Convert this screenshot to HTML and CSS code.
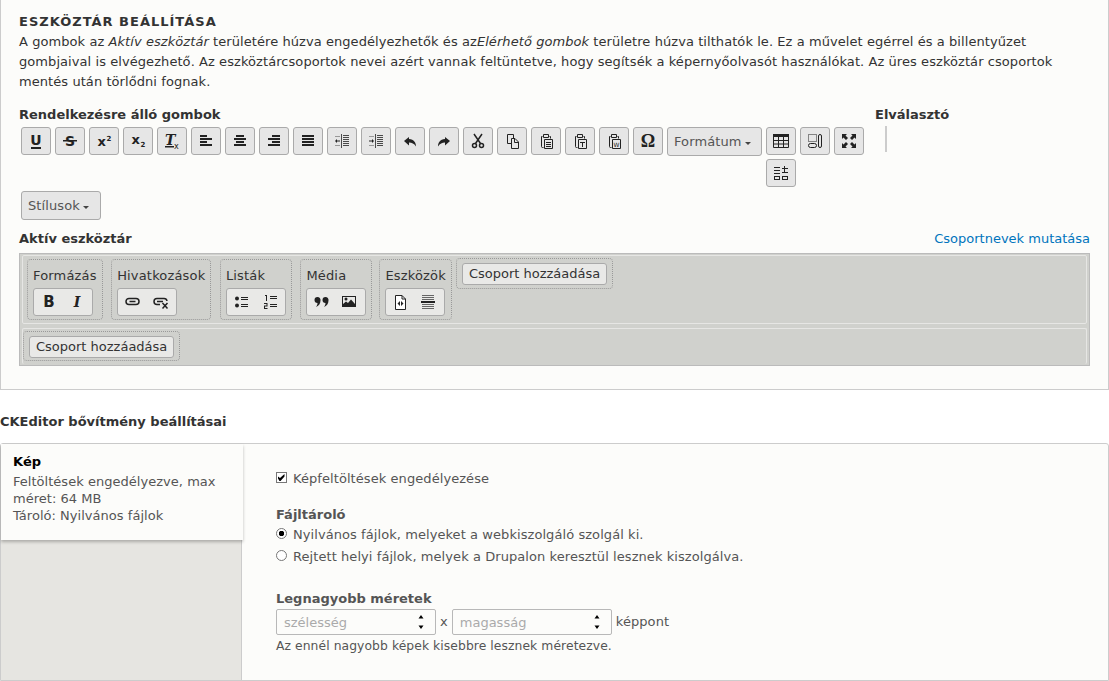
FILE: index.html
```html
<!DOCTYPE html>
<html lang="hu">
<head>
    <meta charset="UTF-8">
    <meta name="viewport" content="width=device-width, initial-scale=1.0">
    <title>Eszköztár beállítása</title>
    <link rel="stylesheet" href="styles.css">
</head>
<body>
    <section class="panel">
        <h2 class="panel-title">Eszköztár beállítása</h2>
        <p class="panel-help">A gombok az <em>Aktív eszköztár</em> területére húzva engedélyezhetők és az<em>Elérhető gombok</em> területre húzva tilthatók le. Ez a művelet egérrel és a billentyűzet gombjaival is elvégezhető. Az eszköztárcsoportok nevei azért vannak feltüntetve, hogy segítsék a képernyőolvasót használókat. Az üres eszköztár csoportok mentés után törlődni fognak.</p>

        <div class="available">
            <div class="available-main">
                <div class="label">Rendelkezésre álló gombok</div>
                <ul class="button-list">
                    <li class="btn"><svg viewBox="0 0 16 16"><text x="8" y="12" class="g-bold" text-anchor="middle">U</text><rect x="3" y="14" width="10" height="2"/></svg></li>
                    <li class="btn"><svg viewBox="0 0 16 16"><text x="8" y="13" class="g-bold" text-anchor="middle">S</text><rect x="1" y="7" width="14" height="1.500"/></svg></li>
                    <li class="btn"><svg viewBox="0 0 16 16"><text x="1.500" y="13" class="g-bold g-mid">x</text><text x="10.500" y="8" class="g-bold g-tiny">2</text></svg></li>
                    <li class="btn"><svg viewBox="0 0 16 16"><text x="1.500" y="11" class="g-bold g-mid">x</text><text x="10.500" y="14" class="g-bold g-tiny">2</text></svg></li>
                    <li class="btn"><svg viewBox="0 0 16 16"><text x="1" y="12" class="g-serif">T</text><rect x="1" y="13" width="9" height="1.500"/><text x="10" y="15.500" class="g-plain g-tiny-x">x</text></svg></li>
                    <li class="btn"><svg viewBox="0 0 16 16"><path d="M2 2h7v2H2zM2 5h12v2H2zM2 8h7v2H2zM2 11h12v2H2z"/></svg></li>
                    <li class="btn"><svg viewBox="0 0 16 16"><path d="M4 2h8v2H4zM2 5h12v2H2zM4 8h8v2H4zM2 11h12v2H2z"/></svg></li>
                    <li class="btn"><svg viewBox="0 0 16 16"><path d="M6 2h8v2H6zM2 5h12v2H2zM6 8h8v2H6zM2 11h12v2H2z"/></svg></li>
                    <li class="btn"><svg viewBox="0 0 16 16"><path d="M2 2h12v2H2zM2 5h12v2H2zM2 8h12v2H2zM2 11h12v2H2z"/></svg></li>
                    <li class="btn"><svg viewBox="0 0 16 16"><path d="M7 1h1v14H7zM9 2h6v1H9zM9 4h6v1H9zM9 6h6v1H9zM9 8h6v1H9zM9 10h6v1H9zM9 12h6v1H9z" opacity=".8"/><path d="M3 7.500h3v1H3V10L1 8l2-2z"/><path d="M1 3h5v1H1zM1 12h5v1H1z" opacity=".4"/></svg></li>
                    <li class="btn"><svg viewBox="0 0 16 16"><path d="M7 1h1v14H7zM9 2h6v1H9zM9 4h6v1H9zM9 6h6v1H9zM9 8h6v1H9zM9 10h6v1H9zM9 12h6v1H9z" opacity=".8"/><path d="M1 7.500h3V6l2 2-2 2V8.500H1z"/><path d="M1 3h5v1H1zM1 12h5v1H1z" opacity=".4"/></svg></li>
                    <li class="btn"><svg viewBox="0 0 16 16"><path d="M7 4 2 8l5 4.500v-3c3 0 5 1 7 4 0-4-2-7-7-7.500z"/></svg></li>
                    <li class="btn"><svg viewBox="0 0 16 16"><path d="M9 4l5 4-5 4.500v-3c-3 0-5 1-7 4 0-4 2-7 7-7.500z"/></svg></li>
                    <li class="btn"><svg viewBox="0 0 16 16" class="line thick"><path d="M4 1l6.500 9.500M12 1 5.500 10.500"/><circle cx="4.500" cy="12.500" r="2"/><circle cx="11.500" cy="12.500" r="2"/></svg></li>
                    <li class="btn"><svg viewBox="0 0 16 16" class="line"><path d="M9.500 5V1.500h-6v9h4"/><path d="M7.500 5.500H11L14.500 9v6.500h-7z"/><path d="M10.500 5.500v4h4"/></svg></li>
                    <li class="btn"><svg viewBox="0 0 16 16" class="line"><path d="M4.500 3.500h-1v10a1 1 0 0 0 1 1h1M11.500 3.500h1v2M5.500 1.500h5v3h-5zM6.500 6.500h8v9h-8zM8 9.500h5M8 11.500h5M8 13.500h5"/></svg></li>
                    <li class="btn"><svg viewBox="0 0 16 16" class="line"><path d="M4.500 3.500h-1v10a1 1 0 0 0 1 1h1M11.500 3.500h1v2M5.500 1.500h5v3h-5zM6.500 6.500h8v9h-8zM8 9.500h5M10.500 9.500V14"/></svg></li>
                    <li class="btn"><svg viewBox="0 0 16 16" class="line"><path d="M4.500 3.500h-1v10a1 1 0 0 0 1 1h1M11.500 3.500h1v2M5.500 1.500h5v3h-5zM6.500 6.500h8v9h-8z"/><text x="10.500" y="13.500" class="g-w" text-anchor="middle">W</text></svg></li>
                    <li class="btn btn-omega">Ω</li>
                    <li class="btn btn-combo btn-format">Formátum <span class="caret"></span></li>
                    <li class="btn"><svg viewBox="0 0 16 16"><path d="M0 1h16v3H0z"/><path d="M.5 3.500h15v11H.5zM.5 7.500h15M.5 11h15M5.500 3.500v11M10.500 3.500v11" fill="none" stroke="#222"/></svg></li>
                    <li class="btn"><svg viewBox="0 0 16 16" class="line"><path d="M1.500 1.500h8v7h-8z" stroke-dasharray="1 1"/><rect x="1.500" y="10.500" width="8" height="4" rx="2"/><rect x="11.500" y="1.500" width="3" height="13" rx="1.500"/></svg></li>
                    <li class="btn"><svg viewBox="0 0 16 16"><path d="M1 1h5L4.500 2.500 7 5 5 7 2.500 4.500 1 6zM15 1v5l-1.500-1.500L11 7 9 5l2.500-2.500L10 1zM1 15v-5l1.500 1.500L5 9l2 2-2.500 2.500L6 15zM15 15h-5l1.500-1.500L9 11l2-2 2.500 2.500L15 10z"/></svg></li>
                    <li class="btn"><svg viewBox="0 0 16 16"><path d="M1 2h6v1H1zM1 5h6v1H1zM1 8h6v1H1zM1 11h6v4H1zM2 12v2h4v-2zM9 3h6v1H9zM11 1h1v6h-1zM9 7h6v1H9zM9 11h6v4H9zM10 12v2h4v-2z"/></svg></li>
                    <li class="btn btn-combo btn-styles">Stílusok <span class="caret"></span></li>
                </ul>
            </div>
            <div class="available-side">
                <div class="label">Elválasztó</div>
                <div class="divider-item"></div>
            </div>
        </div>

        <div class="active-head">
            <div class="label">Aktív eszköztár</div>
            <a class="group-link" href="#">Csoportnevek mutatása</a>
        </div>
        <div class="active-bar">
            <div class="row">
                <div class="group">
                    <div class="group-name">Formázás</div>
                    <div class="group-btns">
                        <span class="g-btn"><svg viewBox="0 0 16 16"><text x="8" y="13" class="g-bold g-large" text-anchor="middle">B</text></svg></span>
                        <span class="g-btn"><svg viewBox="0 0 16 16"><text x="8" y="13" class="g-serif" text-anchor="middle">I</text></svg></span>
                    </div>
                </div>
                <div class="group">
                    <div class="group-name">Hivatkozások</div>
                    <div class="group-btns">
                        <span class="g-btn"><svg viewBox="0 0 16 16" class="line thick"><rect x="1" y="4.500" width="13" height="6" rx="3"/><path d="M4.500 7.500h6"/></svg></span>
                        <span class="g-btn"><svg viewBox="0 0 16 16" class="line thick"><path d="M10 4.500H4a3 3 0 0 0 0 6h3M4 7.500h6M10 4.500h1a3 3 0 0 1 3 2.500M9.500 9l5 5.500M14.500 9l-5 5.500"/></svg></span>
                    </div>
                </div>
                <div class="group">
                    <div class="group-name">Listák</div>
                    <div class="group-btns">
                        <span class="g-btn"><svg viewBox="0 0 16 16"><circle cx="3" cy="4.500" r="2"/><circle cx="3" cy="11.500" r="2"/><path d="M7 3h7v1H7zM7 5h7v1H7zM7 10h7v1H7zM7 12h7v1H7z"/></svg></span>
                        <span class="g-btn"><svg viewBox="0 0 16 16"><path d="M3 1h2v6H4V2H3zM2 9h3.500v3.500H3V14h2.500v1H2v-3.500h2.500V10H2zM8 2h7v1H8zM8 4h7v1H8zM8 10h7v1H8zM8 12h7v1H8z"/></svg></span>
                    </div>
                </div>
                <div class="group">
                    <div class="group-name">Média</div>
                    <div class="group-btns">
                        <span class="g-btn"><svg viewBox="0 0 16 16"><path d="M3.500 3a3 3 0 0 1 3 3.500C6.500 10 4.500 12 2 13c1-1.500 1.500-2.500 1.500-4a3 3 0 0 1 0-6zM11.500 3a3 3 0 0 1 3 3.500C14.500 10 12.500 12 10 13c1-1.500 1.500-2.500 1.500-4a3 3 0 0 1 0-6z"/></svg></span>
                        <span class="g-btn"><svg viewBox="0 0 16 16"><path d="M0 2h14v11H0zM1 3v9h12V3z" fill-rule="evenodd"/><circle cx="4" cy="5" r="1.500"/><path d="M1 12v-2l3-2.500L6 9l3-3.500 4 4.500v2z"/></svg></span>
                    </div>
                </div>
                <div class="group group-tools">
                    <div class="group-name">Eszközök</div>
                    <div class="group-btns">
                        <span class="g-btn"><svg viewBox="0 0 16 16"><path d="M2.500 1.500h6.500l3.500 3.500v10.500h-10z" fill="#fff" stroke="#222"/><path d="M9 1.500V5h3.500" fill="none" stroke="#222"/><path d="M7 7 4.500 9.500 7 12V7zM8 7l2.500 2.500L8 12V7z"/></svg></span>
                        <span class="g-btn"><svg viewBox="0 0 16 16"><path d="M0 7h14v2H0z"/><path d="M1 1h12v1H1zM1 3h12v1H1zM1 5h12v1H1zM1 10h12v1H1zM1 12h12v1H1zM1 14h12v1H1z" fill="#666"/></svg></span>
                    </div>
                </div>
                <div class="group group-add">
                    <span class="add-btn">Csoport hozzáadása</span>
                </div>
            </div>
            <div class="row row-empty">
                <div class="group group-add">
                    <span class="add-btn">Csoport hozzáadása</span>
                </div>
            </div>
        </div>
    </section>

    <h3 class="settings-title">CKEditor bővítmény beállításai</h3>

    <section class="tabs">
        <div class="tabs-menu">
            <div class="tab-item">
                <strong>Kép</strong>
                <span>Feltöltések engedélyezve, max méret: 64 MB</span>
                <span>Tároló: Nyilvános fájlok</span>
            </div>
        </div>
        <div class="tabs-pane">
            <div class="check-row">
                <span class="checkbox"><svg viewBox="0 0 9 9"><path d="M1 3.500 3 5l4.500-4v2.500L3.500 8h-1L1 5.500z"/></svg></span>
                Képfeltöltések engedélyezése
            </div>
            <div class="field-label">Fájltároló</div>
            <div class="radio-row"><span class="radio radio-on"></span>Nyilvános fájlok, melyeket a webkiszolgáló szolgál ki.</div>
            <div class="radio-row"><span class="radio"></span>Rejtett helyi fájlok, melyek a Drupalon keresztül lesznek kiszolgálva.</div>
            <div class="field-label field-sizes">Legnagyobb méretek</div>
            <div class="size-row">
                <div class="num"><input type="text" placeholder="szélesség"><svg viewBox="0 0 6 16"><path d="M3 1l2.500 3.500h-5zM3 15l2.500-3.500h-5z"/></svg></div>
                <span>x</span>
                <div class="num"><input type="text" placeholder="magasság"><svg viewBox="0 0 6 16"><path d="M3 1l2.500 3.500h-5zM3 15l2.500-3.500h-5z"/></svg></div>
                <span>képpont</span>
            </div>
            <div class="field-help">Az ennél nagyobb képek kisebbre lesznek méretezve.</div>
        </div>
    </section>
</body>
</html>
```

FILE: styles.css
```css
html, body {
    margin: 0;
    padding: 0;
    height: 681px;
    overflow: hidden;
    background-color: #fff;
}

body {
    font-family: "DejaVu Sans", sans-serif;
    font-size: 13px;
    line-height: 20px;
    color: #333;
}

.panel {
    box-sizing: border-box;
    height: 390px;
    padding: 12px 18px 0 18px;
    background-color: #fcfcfa;
    border: 1px solid #ccc;
    border-top: none;
}

.panel-title {
    margin: 0;
    font-size: 13px;
    line-height: 20px;
    font-weight: bold;
    text-transform: uppercase;
    letter-spacing: 1px;
}

.panel-help {
    margin: 0 0 13px;
    letter-spacing: 0.07px;
}

.label {
    font-weight: bold;
}

.available {
    display: flex;
    height: 124px;
}

.available-main {
    width: 856px;
}

.button-list {
    list-style: none;
    margin: 2px 0 0;
    padding: 0 0 0 2px;
}

.btn {
    float: left;
    box-sizing: border-box;
    width: 30px;
    height: 28px;
    margin: 0 4px 4px 0;
    display: flex;
    align-items: center;
    justify-content: center;
    background-color: #e6e6e6;
    border: 1px solid #aaa;
    border-radius: 3px;
}

.btn svg {
    width: 16px;
    height: 16px;
}

.btn-omega {
    font-family: "Liberation Serif", serif;
    font-weight: bold;
    font-size: 18px;
    color: #222;
}

.btn-combo {
    height: 29px;
    padding: 1px 0 0 6px;
    color: #555;
    gap: 3px;
    justify-content: flex-start;
    letter-spacing: 0.1px;
}

.btn-format {
    width: 95px;
}

.btn-styles {
    width: 80px;
}

.caret {
    width: 0;
    height: 0;
    margin-top: 2px;
    border-top: 3px solid #444;
    border-left: 3px solid transparent;
    border-right: 3px solid transparent;
}

.divider-item {
    width: 2px;
    height: 26px;
    margin: 1px 0 0 10px;
    background-color: #ccc;
}

svg {
    fill: #222;
}

svg.line {
    fill: none;
    stroke: #222;
    stroke-width: 1;
}

svg.thick {
    stroke-width: 1.500;
}

svg text {
    stroke: none;
    fill: #222;
}

.g-bold {
    font-family: "DejaVu Sans", sans-serif;
    font-weight: bold;
    font-size: 14px;
}

.g-mid {
    font-size: 13px;
}

.g-tiny {
    font-size: 7px;
}

.g-large {
    font-size: 15px;
}

.g-plain {
    font-family: "DejaVu Sans", sans-serif;
}

.g-tiny-x {
    font-size: 8px;
}

.g-serif {
    font-family: "DejaVu Serif", serif;
    font-style: italic;
    font-weight: bold;
    font-size: 14px;
}

.g-w {
    font-family: "DejaVu Sans", sans-serif;
    font-size: 6px;
}

.active-head {
    display: flex;
    justify-content: space-between;
}

.group-link {
    color: #0074bd;
    text-decoration: none;
}

.active-bar {
    box-sizing: border-box;
    width: 1071px;
    height: 113px;
    margin-top: 4px;
    padding: 1px 2px;
    background-color: #d0d1cd;
    border: 1px solid #bbb;
    display: flex;
    flex-direction: column;
    gap: 4px;
}

.row {
    box-sizing: border-box;
    height: 69px;
    padding: 3px 0 0 4px;
    display: flex;
    align-items: flex-start;
    gap: 8.5px;
    border: 1px solid #e6e6e4;
    border-radius: 2px;
}

.row-empty {
    height: 36px;
    padding: 2px 0 0 0;
    border-bottom: none;
}

.group {
    box-sizing: border-box;
    height: 61px;
    padding: 0 5px;
    border: 1px dotted #999;
    border-radius: 4px;
}

.group-tools {
    margin-left: -1.5px;
}

.group-name {
    margin-top: 6px;
    height: 22px;
    white-space: nowrap;
    line-height: 20px;
    letter-spacing: 0.17px;
}

.group-btns {
    display: inline-flex;
    box-sizing: border-box;
    height: 28px;
    padding: 0 1px;
    background-color: #e9e9e7;
    border: 1px solid #aaa;
    border-radius: 3px;
}

.g-btn {
    width: 28px;
    display: flex;
    align-items: center;
    justify-content: center;
}

.g-btn svg {
    width: 16px;
    height: 16px;
}

.group-add {
    height: 31px;
    margin: -1px 0 0 -4.5px;
    padding: 4px 5px;
}

.row-empty .group-add {
    height: 30px;
    margin: 0;
}

.add-btn {
    display: block;
    box-sizing: border-box;
    height: 22px;
    padding: 0 6px;
    line-height: 20px;
    background-color: #e9e9e7;
    border: 1px solid #aaa;
    border-radius: 3px;
    white-space: nowrap;
}

.settings-title {
    margin: 22px 0 11px;
    font-size: 13px;
    line-height: 20px;
    font-weight: bold;
}

.tabs {
    box-sizing: border-box;
    height: 238px;
    display: flex;
    background-color: #fcfcfa;
    border: 1px solid #ccc;
    border-radius: 3px 3px 0 0;
}

.tabs-menu {
    box-sizing: border-box;
    flex: none;
    width: 241px;
    background-color: #e6e5e1;
    border-right: 1px solid #ccc;
}

.tab-item {
    box-sizing: border-box;
    width: 242px;
    height: 96px;
    padding: 9px 12px;
    background-color: #fcfcfa;
    color: #555;
    line-height: 17px;
    letter-spacing: 0.03px;
    box-shadow: 0 2px 3px rgba(0, 0, 0, 0.25);
    position: relative;
}

.tab-item strong {
    display: block;
    margin-bottom: 3px;
    color: #000;
}

.tab-item span {
    display: block;
}

.tabs-pane {
    flex: 1;
    padding: 25px 34px;
    color: #555;
    letter-spacing: 0.07px;
}

.check-row {
    display: flex;
    align-items: center;
    gap: 6px;
    height: 20px;
}

.checkbox {
    box-sizing: border-box;
    width: 11px;
    height: 11px;
    margin-top: -4px;
    display: flex;
    background-color: #fff;
    border: 1px solid #777;
}

.checkbox svg {
    width: 9px;
    height: 9px;
    fill: #000;
}

.field-label {
    margin-top: 16px;
    margin-bottom: -1px;
    font-weight: bold;
    line-height: 20px;
    letter-spacing: 0;
}

.radio-row {
    display: flex;
    align-items: center;
    gap: 6px;
    height: 22px;
}

.radio {
    box-sizing: border-box;
    width: 11px;
    height: 11px;
    margin-top: -4px;
    flex: none;
    border: 1px solid #777;
    border-radius: 50%;
    background-color: #fff;
}

.radio-on {
    background: radial-gradient(circle, #000 0, #000 2.500px, #fff 3px);
}

.field-sizes {
    margin-top: 21px;
    margin-bottom: 0;
}

.size-row {
    display: flex;
    align-items: center;
    gap: 4px;
}

.num {
    box-sizing: border-box;
    width: 160px;
    height: 26px;
    padding: 0 11px 0 7px;
    display: flex;
    align-items: center;
    background-color: #fcfcfa;
    border: 1px solid #b8b8b8;
    border-radius: 2px;
}

.num input {
    flex: 1;
    width: 100px;
    padding: 0;
    border: none;
    outline: none;
    background: transparent;
    font-family: "DejaVu Sans", sans-serif;
    font-size: 13px;
}

.num input::placeholder {
    color: #aaa;
    opacity: 1;
}

.num svg {
    width: 6px;
    height: 16px;
    fill: #000;
}

.field-help {
    margin-top: 1px;
    font-size: 12.35px;
    line-height: 20px;
}
```
